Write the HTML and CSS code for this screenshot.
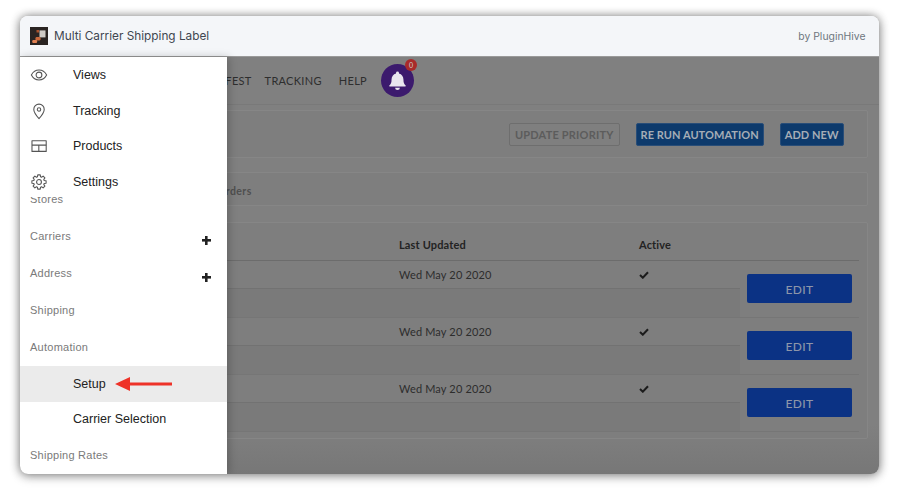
FILE: index.html
```html
<!DOCTYPE html>
<html lang="en">
<head>
<meta charset="utf-8">
<title>Multi Carrier Shipping Label</title>
<link rel="stylesheet" href="styles.css">
</head>
<body>
<div class="window">
  <header class="titlebar">
    <div class="brand">
      <svg class="logo" viewBox="0 0 18 18"><rect width="18" height="18" fill="#2a2422"/><rect x="9.500" y="3.400" width="6" height="7" fill="#cfcbc6"/><rect x="5.500" y="10" width="5" height="3.500" rx="1.200" fill="#c9683c"/><rect x="2.200" y="13" width="5" height="3" rx="1.200" fill="#e08052"/><rect x="6.500" y="3" width="2.500" height="2.500" fill="#a9522e"/></svg>
      <span class="app-name">Multi Carrier Shipping Label</span>
    </div>
    <span class="by">by PluginHive</span>
  </header>
  <div class="stage">
    <main class="content">
      <nav class="topnav">
        <a>MANIFEST</a>
        <a>TRACKING</a>
        <a class="help">HELP</a>
        <div class="bell">
          <svg viewBox="0 0 24 24" width="23" height="23"><path fill="#e9e6ee" d="M12 2.500a1.500 1.500 0 0 1 1.500 1.500v.6c3 .7 4.700 3.200 4.700 6.300 0 3.400.8 5 2.300 6.300.4.400.2 1-.4 1H3.900c-.6 0-.8-.6-.4-1C5 15.900 5.800 14.300 5.800 10.900c0-3.100 1.700-5.600 4.700-6.300V4A1.500 1.500 0 0 1 12 2.500zM9.500 19.500h5a2.500 2.500 0 0 1-5 0z"/></svg>
          <span class="badge">0</span>
        </div>
      </nav>
      <section class="panel actions">
        <button class="btn ghost">UPDATE PRIORITY</button>
        <button class="btn solid">RE RUN AUTOMATION</button>
        <button class="btn solid">ADD NEW</button>
      </section>
      <section class="panel tabs"><span>Orders</span></section>
      <section class="panel tablewrap">
        <div class="thead">
          <span></span><span>Last Updated</span><span>Active</span>
        </div>
        <div class="trow">
          <div class="cells"><span></span><span>Wed May 20 2020</span><svg class="tick" viewBox="0 0 10 8"><path d="M1 4l2.800 2.700L9 1.200"/></svg></div>
          <div class="action"><button class="edit">EDIT</button></div>
        </div>
        <div class="trow">
          <div class="cells"><span></span><span>Wed May 20 2020</span><svg class="tick" viewBox="0 0 10 8"><path d="M1 4l2.800 2.700L9 1.200"/></svg></div>
          <div class="action"><button class="edit">EDIT</button></div>
        </div>
        <div class="trow">
          <div class="cells"><span></span><span>Wed May 20 2020</span><svg class="tick" viewBox="0 0 10 8"><path d="M1 4l2.800 2.700L9 1.200"/></svg></div>
          <div class="action"><button class="edit">EDIT</button></div>
        </div>
      </section>
    </main>
    <aside class="sidebar">
      <div class="primary">
        <a class="item">
          <svg class="ico" viewBox="0 0 20 20"><path d="M1.500 10C3.500 6.300 6.500 4.500 10 4.500s6.500 1.800 8.500 5.500c-2 3.700-5 5.500-8.500 5.500S3.500 13.700 1.500 10z"/><circle cx="10" cy="10" r="3.200"/></svg>
          Views
        </a>
        <a class="item">
          <svg class="ico" viewBox="0 0 20 20"><path d="M10 18.500c-3.400-4-5.800-7-5.800-10.300a5.800 5.800 0 0 1 11.600 0c0 3.300-2.400 6.300-5.800 10.300z"/><circle cx="10" cy="8.200" r="1.900"/></svg>
          Tracking
        </a>
        <a class="item">
          <svg class="ico" viewBox="0 0 20 20"><rect x="2.200" y="4.200" width="15.800" height="11.800"/><path d="M2.200 9h15.800M9.800 9v7"/></svg>
          Products
        </a>
        <a class="item">
          <svg class="ico" viewBox="0 0 20 20"><circle cx="10" cy="10" r="2.700"/><polygon points="8.250,4.260 8.610,2.120 11.390,2.120 11.750,4.260 12.820,4.700 14.590,3.450 16.550,5.410 15.300,7.180 15.740,8.250 17.880,8.610 17.880,11.390 15.740,11.750 15.300,12.820 16.550,14.590 14.590,16.550 12.820,15.300 11.750,15.740 11.390,17.880 8.610,17.880 8.250,15.740 7.180,15.300 5.410,16.550 3.450,14.590 4.700,12.820 4.260,11.750 2.120,11.390 2.120,8.610 4.260,8.250 4.700,7.180 3.450,5.410 5.410,3.450 7.180,4.700"/></svg>
          Settings
        </a>
      </div>
      <div class="sections">
        <div class="sec">Stores</div>
        <div class="sec">Carriers<span class="plus"></span></div>
        <div class="sec">Address<span class="plus"></span></div>
        <div class="sec">Shipping</div>
        <div class="sec">Automation</div>
        <a class="sub current">Setup
          <svg class="arrow" viewBox="0 0 57 14" width="57" height="14"><path fill="#ee3228" d="M0 7 15 0v5.500h42v3H15V14z"/></svg>
        </a>
        <a class="sub">Carrier Selection</a>
        <div class="sec">Shipping Rates</div>
      </div>
    </aside>
  </div>
</div>
</body>
</html>
```
FILE: styles.css
```css
* { box-sizing: border-box; }
html, body { margin: 0; height: 100%; background: #fff; }
body { padding: 16px 21px 15px 20px; font-family: "Liberation Sans", Arial, sans-serif; overflow: hidden; }

.window {
  height: 458px;
  display: flex;
  flex-direction: column;
  border-radius: 8px;
  overflow: hidden;
  box-shadow: 0 0 10px rgba(0,0,0,.45), 0 3px 12px rgba(0,0,0,.2);
}
.titlebar {
  flex: 0 0 41px;
  background: #f4f6f9;
  display: flex;
  align-items: center;
  justify-content: space-between;
  padding: 0 13.500px 0 10px;
  border-bottom: 1px solid #9a9a9a;
}
.brand { display: flex; align-items: center; gap: 6px; }
.logo { width: 18px; height: 18px; display: block; }
.app-name { font: 11.800px Inter, sans-serif; color: #3f4650; }
.by { font: 10.400px Inter, sans-serif; color: #6f7680; }

.stage { position: relative; flex: 1; min-height: 0; }
.content {
  height: 100%;
  background: linear-gradient(#808080 0, #808080 88%, #777 100%);
  font-family: Lato, sans-serif;
  padding-right: 11px;
  padding-left: 10px;
}
.topnav {
  height: 48px;
  border-bottom: 1px solid #797979;
  display: flex;
  align-items: center;
  justify-content: flex-end;
  padding-right: 465px;
  gap: 13px;
  font-size: 11px;
  letter-spacing: .3px;
  color: #2e2e2e;
  margin-right: -11px;
  margin-left: -10px;
}
.topnav a { line-height: 48px; }
.help { margin-left: 4px; }
.bell {
  position: relative;
  width: 33px;
  height: 33px;
  margin-left: 1px;
  border-radius: 50%;
  background: #3c1a6d;
  display: flex;
  align-items: center;
  justify-content: center;
}
.badge {
  position: absolute;
  top: -5px;
  right: -3px;
  width: 12px;
  height: 12px;
  border-radius: 50%;
  background: #a92a2a;
  color: #ccc;
  font-size: 7px;
  line-height: 12px;
  text-align: center;
  letter-spacing: 0;
}
.panel { border: 1px solid #868686; border-radius: 2px; background: #7e7e7e; }
.actions {
  margin-top: 5px;
  height: 48px;
  display: flex;
  align-items: center;
  justify-content: flex-end;
  gap: 16px;
  padding-right: 23.500px;
}
.btn {
  height: 23px;
  font: 700 11px Lato, sans-serif;
  letter-spacing: .05px;
  border-radius: 2px;
  white-space: nowrap;
}
.ghost { background: #7f7f7f; border: 1px solid #6e6e6e; color: #5c5c5c; padding: 0 5px; letter-spacing: .2px; }
.solid { background: #0d3a6c; border: 1px solid #284d78; color: #a5adb6; padding: 0 4px; }
.tabs {
  margin-top: 14px;
  height: 34px;
  display: flex;
  align-items: center;
  padding: 3px 0 0 186px;
  font-weight: 700;
  font-size: 10.500px;
  letter-spacing: .4px;
  color: #4f4f4f;
}
.tablewrap { margin-top: 16px; height: 217px; padding: 6px 8px 6px 0; }
.thead, .cells { display: grid; grid-template-columns: 368px 240px 1fr; }
.thead {
  height: 32px;
  align-items: center;
  border-bottom: 1px solid #6c6c6c;
  font-weight: 700;
  font-size: 11px;
  letter-spacing: .15px;
  color: #232323;
}
.trow {
  display: grid;
  grid-template-columns: 1fr 119px;
  height: 57px;
  border-bottom: 1px solid #767676;
  background: #7a7a7a;
}
.cells {
  height: 28px;
  align-items: center;
  border-bottom: 1px solid #727272;
  background: #7e7e7e;
  font-size: 11px;
  letter-spacing: .15px;
  color: #2d2d2d;
}
.tick { width: 10px; height: 8px; fill: none; stroke: #1c1c1c; stroke-width: 2; }
.action { background: #7e7e7e; padding: 13px 7px 0; }
.edit {
  width: 105px;
  height: 29px;
  border: 0;
  border-radius: 2px;
  background: #0b3284;
  color: #8d96a9;
  font: 500 12px Lato, sans-serif;
  letter-spacing: .4px;
  padding-top: 3px;
}

.sidebar {
  position: absolute;
  left: 0;
  top: 0;
  bottom: 0;
  width: 207px;
  background: #fff;
  overflow: hidden;
  box-shadow: 2px 0 8px rgba(0,0,0,.22);
}
.primary { position: relative; z-index: 1; height: 139.500px; padding-top: .5px; background: #fff; }
.item {
  display: flex;
  align-items: center;
  height: 35.500px;
  padding-left: 10px;
  font-size: 12.500px;
  color: #222;
}
.ico {
  width: 18px;
  height: 18px;
  margin-right: 25px;
  fill: none;
  stroke: #555;
  stroke-width: 1.200;
  stroke-linejoin: round;
}
.sections { margin-top: -15.500px; }
.sec {
  display: flex;
  align-items: center;
  justify-content: space-between;
  height: 37px;
  padding: 0 16.500px 2px 10px;
  font-size: 11px;
  letter-spacing: .25px;
  color: #7a7a7a;
}
.plus {
  position: relative;
  top: 5px;
  width: 9px;
  height: 9px;
  background:
    linear-gradient(#222,#222) center/100% 2.600px no-repeat,
    linear-gradient(#222,#222) center/2.600px 100% no-repeat;
}
.sub {
  display: flex;
  align-items: center;
  height: 35.500px;
  padding-left: 53px;
  font-size: 12.500px;
  color: #222;
}
.current { background: #ebebeb; }
.arrow { margin-left: 9px; }
```
